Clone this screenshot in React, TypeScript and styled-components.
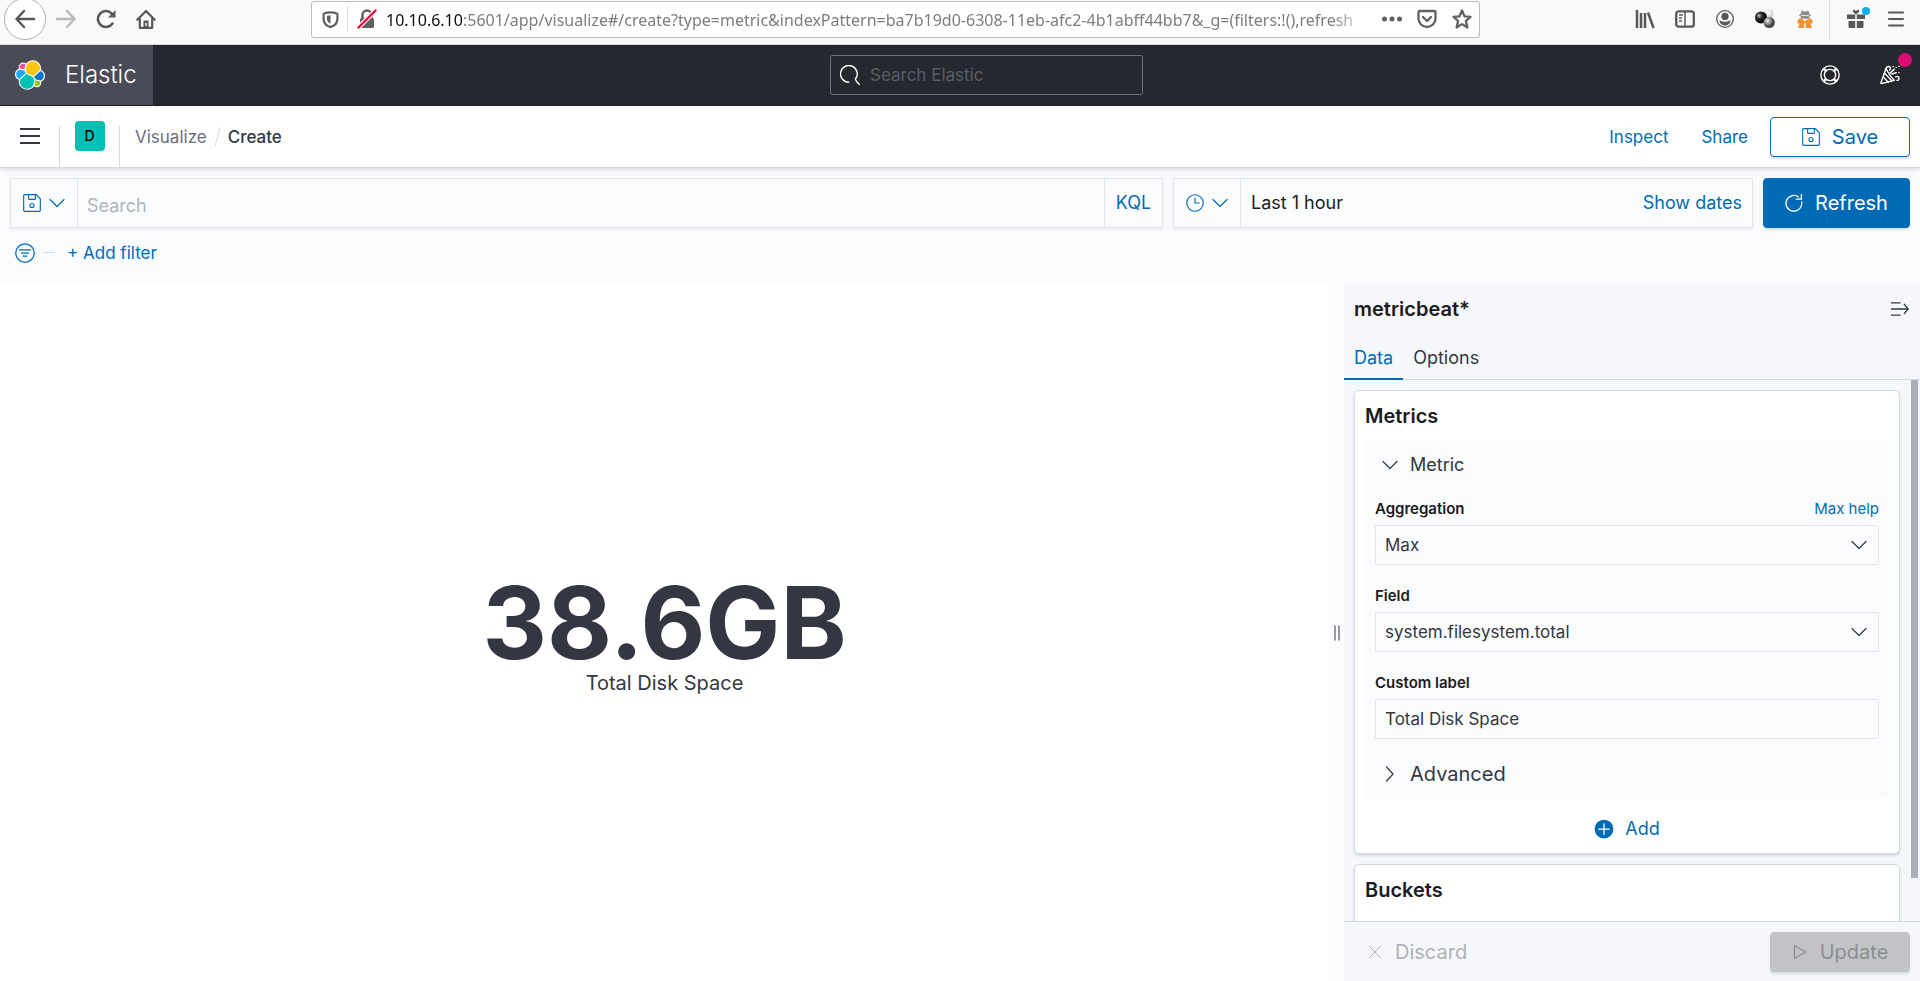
import React from 'react';
import styled, { createGlobalStyle } from 'styled-components';

const blue = '#006bb4';
const ink = '#343741';
const title = '#1a1c21';
const line = '#d3dae6';
const faint = '#e2e5f0';
const sans = 'Inter, "Liberation Sans", sans-serif';

const GlobalStyle = createGlobalStyle`
  *, *::before, *::after { box-sizing: border-box; }
  body { margin: 0; background: #fafbfd; color: ${ink}; font: 400 18px/24px ${sans}; }
  button, input, select { font: inherit; color: inherit; margin: 0; }
  button { background: none; border: 0; padding: 0; cursor: pointer; }
  a { color: ${blue}; text-decoration: none; }
  h1, h2, p { margin: 0; }
  svg { display: block; flex: none; }
`;

const Page = styled.div`
  display: flex;
  flex-direction: column;
  height: 100vh;
  overflow: hidden;
`;

/* Browser toolbar */

const BrowserBar = styled.header`
  display: flex;
  align-items: center;
  flex: none;
  height: 45px;
  padding: 0 4px 6px;
  background: #f9f9fa;
  border-bottom: 1px solid #dcdcdd;
  color: #58585a;
`;

const ToolButton = styled.button<{ $round?: boolean; $dim?: boolean }>`
  display: flex;
  align-items: center;
  justify-content: center;
  flex: none;
  width: ${(p) => (p.$round ? 42 : 40)}px;
  height: ${(p) => (p.$round ? 42 : 40)}px;
  border-radius: 50%;
  border: ${(p) => (p.$round ? '1px solid #b1b1b3' : '0')};
  background: ${(p) => (p.$round ? '#fff' : 'none')};
  color: ${(p) => (p.$dim ? '#b9b9ba' : 'inherit')};

  svg { overflow: visible; }
`;

const UrlBox = styled.div`
  display: flex;
  align-items: center;
  flex: 1;
  min-width: 0;
  height: 37px;
  margin: 0 145px;
  padding: 0 7px 0 10px;
  background: #fff;
  border: 1px solid #bdbdbf;
  border-radius: 3px;
  color: #606062;
`;

const UrlRule = styled.span`
  width: 1px;
  height: 26px;
  margin: 0 9px 0 8px;
  background: #dcdcdd;
`;

const Url = styled.div`
  flex: 1;
  min-width: 0;
  margin: 2px 14px 0 9px;
  overflow: hidden;
  white-space: nowrap;
  font: 400 16px/24px "Noto Sans", sans-serif;
  color: #7d7d7f;
  mask-image: linear-gradient(to left, transparent 0, #000 36px);

  b { font-weight: 400; color: #0c0c0d; }
`;

const UrlActions = styled.div`
  display: flex;
  gap: 15px;
`;

const ToolRule = styled.span`
  width: 1px;
  height: 40px;
  margin: 0 6px 0 4px;
  background: #dcdcdd;
`;

/* Elastic header */

const TopHeader = styled.div`
  display: grid;
  grid-template-columns: calc(50% - 130px) 313px 1fr;
  align-items: center;
  flex: none;
  height: 61px;
  background: #25282f;
  border-bottom: 1px solid #1d1e24;
  color: #fff;
`;

const Brand = styled.a`
  display: flex;
  align-items: center;
  justify-self: start;
  gap: 20px;
  height: 60px;
  padding: 0 16px 0 15px;
  background: #494c56;
  color: #fff;
  font-size: 24px;
  font-weight: 300;
`;

const GlobalSearch = styled.label`
  display: flex;
  align-items: center;
  gap: 10px;
  height: 40px;
  padding: 0 9px;
  border: 1px solid #6c6e73;
  border-radius: 2px;

  input {
    flex: 1;
    min-width: 0;
    padding: 0;
    border: 0;
    outline: 0;
    background: none;
    font-size: 17px;
  }
  input::placeholder { color: #5b5d63; opacity: 1; }
`;

const HeaderIcons = styled.div`
  display: flex;
  justify-self: end;
  height: 60px;
`;

const HeaderIcon = styled.button`
  position: relative;
  display: flex;
  align-items: center;
  justify-content: center;
  width: 60px;
`;

const NewsDot = styled.span`
  position: absolute;
  top: 8px;
  right: 8px;
  width: 14px;
  height: 14px;
  border-radius: 50%;
  background: #dd0a73;
`;

/* Breadcrumb bar */

const NavBar = styled.nav`
  display: flex;
  align-items: center;
  flex: none;
  height: 62px;
  padding-right: 10px;
  background: #fff;
  border-bottom: 1px solid ${line};
  box-shadow: 0 2px 3px rgba(152, 162, 179, 0.3);
  font-size: 17px;
  z-index: 1;
`;

const NavCell = styled.div`
  display: flex;
  align-items: center;
  justify-content: center;
  width: 60px;
  height: 41px;
  margin-top: 20px;
  padding-bottom: 21px;
  border-right: 1px solid ${line};
`;

const SpaceBadge = styled.button`
  flex: none;
  width: 30px;
  height: 30px;
  border-radius: 4px;
  background: #00bfb3;
  color: #000;
  font-size: 14px;
  font-weight: 500;
  line-height: 30px;
`;

const Crumbs = styled.div`
  display: flex;
  align-items: center;
  flex: 1;
  gap: 7px;
  padding-left: 15px;

  a { color: #69707d; }
  strong { font-weight: 500; }
`;

const Slash = styled.span`
  width: 1px;
  height: 20px;
  margin: 0 3px;
  background: ${line};
  transform: rotate(15deg);
`;

const NavLinks = styled.div`
  display: flex;
  align-items: center;
  gap: 33px;
  margin-right: 22px;
`;

const ActionButton = styled.button<{ $kind: 'outline' | 'fill' | 'disabled' }>`
  display: flex;
  align-items: center;
  justify-content: center;
  gap: 12px;
  flex: none;
  width: ${(p) => (p.$kind === 'fill' ? 147 : 140)}px;
  height: ${(p) => (p.$kind === 'fill' ? 50 : 40)}px;
  border: 1px solid ${(p) => (p.$kind === 'disabled' ? '#c2c3c6' : blue)};
  border-radius: 4px;
  background: ${(p) => ({ outline: '#fff', fill: blue, disabled: '#c2c3c6' })[p.$kind]};
  color: ${(p) => ({ outline: blue, fill: '#fff', disabled: '#8d8e92' })[p.$kind]};
  box-shadow: 0 2px 2px rgba(152, 162, 179, 0.3);
  font-size: 20px;
`;

/* Query bar */

const QueryRow = styled.div`
  display: flex;
  flex: none;
  gap: 10px;
  padding: 10px 10px 0;
`;

const ControlGroup = styled.div<{ $width?: number }>`
  display: flex;
  align-items: center;
  flex: ${(p) => (p.$width ? `0 0 ${p.$width}px` : '1')};
  height: 50px;
  background: #fbfcfd;
  border: 1px solid ${faint};
  box-shadow: 0 2px 2px rgba(152, 162, 179, 0.15);
`;

const MenuToggle = styled.button`
  display: flex;
  align-items: center;
  gap: 8px;
  height: 100%;
  padding: 0 12px;
  border-right: 1px solid ${faint};
  color: ${blue};
`;

const QueryInput = styled.input`
  flex: 1;
  min-width: 0;
  height: 100%;
  padding: 4px 9px 0;
  border: 0;
  outline: 0;
  background: none;

  &::placeholder { color: #b0b3ba; opacity: 1; }
`;

const QueryLanguage = styled.button`
  width: 58px;
  height: 100%;
  border-left: 1px solid ${faint};
  color: ${blue};
`;

const TimeRange = styled.button`
  flex: 1;
  height: 100%;
  padding-left: 10px;
  text-align: left;
  color: ${title};
`;

const ShowDates = styled.a`
  padding-right: 10px;
`;

const FilterRow = styled.div`
  display: flex;
  align-items: center;
  flex: none;
  height: 56px;
  padding: 0 15px 7px;
  color: ${blue};
`;

const FilterDash = styled.span`
  width: 12px;
  height: 1px;
  margin: 0 12px 0 8px;
  background: ${line};
`;

const LinkButton = styled.button<{ $small?: boolean }>`
  display: flex;
  align-items: center;
  gap: 11px;
  color: ${blue};
  font-size: ${(p) => (p.$small ? 17 : 18)}px;
`;

/* Workspace */

const Workspace = styled.main`
  display: flex;
  flex: 1;
  min-height: 0;
`;

const Canvas = styled.section`
  display: flex;
  flex-direction: column;
  align-items: center;
  justify-content: center;
  flex: 1;
  padding-top: 4px;
  background: #fff;
`;

const MetricValue = styled.p`
  font-size: 100px;
  font-weight: 700;
  line-height: 96px;
`;

const MetricLabel = styled.p`
  font-size: 20px;
  line-height: 24px;
`;

const Resizer = styled.button`
  display: flex;
  align-items: center;
  justify-content: center;
  flex: none;
  width: 15px;
`;

const Sidebar = styled.aside`
  display: flex;
  flex-direction: column;
  flex: 0 0 576px;
  min-height: 0;
  background: #f5f7fa;
`;

const SidebarHead = styled.div`
  display: flex;
  align-items: center;
  justify-content: space-between;
  flex: none;
  height: 50px;
  padding: 0 11px 0 10px;
`;

const Heading = styled.h2`
  color: ${title};
  font-size: 20px;
  font-weight: 600;
  line-height: 30px;
`;

const Tabs = styled.div`
  display: flex;
  flex: none;
  height: 46px;
  border-bottom: 1px solid ${line};
`;

const Tab = styled.button<{ $active?: boolean }>`
  height: 46px;
  padding: 4px 10px 0;
  border-bottom: 2px solid ${(p) => (p.$active ? blue : 'transparent')};
  color: ${(p) => (p.$active ? blue : ink)};
`;

const ScrollArea = styled.div`
  display: flex;
  flex: 1;
  min-height: 0;
  padding: 0 2px 0 10px;
  overflow: hidden;
`;

const Panels = styled.div`
  display: flex;
  flex-direction: column;
  flex: 1;
  gap: 10px;
  padding: 10px 11px 0 0;
`;

const ScrollThumb = styled.div`
  width: 7px;
  height: 92%;
  background: #abb0b8;
`;

const Panel = styled.section`
  display: flex;
  flex-direction: column;
  flex: none;
  min-height: 80px;
  padding: 10px;
  background: #fff;
  border: 1px solid ${line};
  border-radius: 5px;
  box-shadow: 0 2px 3px rgba(152, 162, 179, 0.35);
`;

const MetricBox = styled.div`
  display: flex;
  flex-direction: column;
  margin-top: 10px;
  padding: 10px;
  background: #fafbfd;
  border-radius: 5px;
`;

const Accordion = styled.button<{ $large?: boolean }>`
  display: flex;
  align-items: center;
  gap: 12px;
  height: ${(p) => (p.$large ? 30 : 27)}px;
  padding-left: 7px;
  font-size: ${(p) => (p.$large ? 20 : 18)}px;
`;

const Field = styled.div`
  display: flex;
  flex-direction: column;
  gap: 5px;
  margin-top: 20px;
`;

const FieldHead = styled.div`
  display: flex;
  justify-content: space-between;
  font-size: 15px;
  line-height: 22px;

  label { color: ${title}; font-weight: 600; }
`;

const SelectWrap = styled.div`
  position: relative;

  svg { position: absolute; right: 12px; top: 12px; pointer-events: none; }
`;

const Select = styled.select`
  display: block;
  width: 100%;
  height: 40px;
  padding: 0 9px;
  appearance: none;
  border: 1px solid ${faint};
  border-radius: 2px;
  background: #fbfcfd;
  font-size: 17px;
`;

const TextInput = styled.input`
  height: 40px;
  padding: 0 9px;
  border: 1px solid ${faint};
  border-radius: 2px;
  background: #fbfcfd;
  font-size: 17px;
`;

const AdvancedRow = styled.div`
  display: flex;
  margin-top: 20px;
`;

const AddRow = styled.div`
  display: flex;
  justify-content: center;
  padding: 18px 0 2px;
`;

const SidebarFoot = styled.div`
  display: flex;
  align-items: center;
  justify-content: space-between;
  flex: none;
  height: 60px;
  padding: 0 10px 0 23px;
  border-top: 1px solid ${line};
`;

const Discard = styled.button`
  display: flex;
  align-items: center;
  gap: 12px;
  color: #b0b2b8;
  font-size: 20px;
`;

/* Icons */

const Svg = ({ size = 20, box = 16, width = 1, children }: { size?: number; box?: number; width?: number; children: React.ReactNode }) => (
  <svg width={size} height={size} viewBox={`0 0 ${box} ${box}`} fill="none" stroke="currentColor" strokeWidth={width} aria-hidden="true">
    {children}
  </svg>
);

const Chevron = ({ right }: { right?: boolean }) => (
  <Svg size={16} width={1.2}>
    <path d={right ? 'M4.5 1l6.5 7-6.5 7' : 'M1 4.5l7 7 7-7'} strokeLinecap="round" strokeLinejoin="round" />
  </Svg>
);

const SaveIcon = () => (
  <Svg size={18}>
    <path d="M1.5.6h10.2l3.7 3.7v10.2a.9.9 0 01-.9.9h-13a.9.9 0 01-.9-.9v-13a.9.9 0 01.9-.9z" />
    <path d="M5 .8v3.4a.6.6 0 00.6.6h4.8a.6.6 0 00.6-.6V.8" />
    <circle cx="8" cy="10.2" r="1.8" />
  </Svg>
);

const logoShapes = [
  ['#fec514', 'M12.58 13.787l7.002 3.211 7.066-6.213a7.849 7.849 0 00.152-1.557c0-4.287-3.464-7.773-7.72-7.773a7.731 7.731 0 00-6.411 3.41l-1.177 6.107 1.088 2.815z'],
  ['#00bfb3', 'M5.333 21.228a8.006 8.006 0 00-.15 1.58c0 4.3 3.48 7.795 7.758 7.795a7.745 7.745 0 006.44-3.43l1.166-6.104-1.556-2.985-7.03-3.213-6.628 6.357z'],
  ['#f04e98', 'M5.288 9.067l4.8 1.137 1.05-5.475A3.804 3.804 0 008.832 3.95a3.826 3.826 0 00-3.811 3.838c0 .435.091.873.267 1.279z'],
  ['#1ba9f5', 'M4.872 10.215c-2.143.714-3.638 2.78-3.638 5.057 0 2.217 1.366 4.197 3.416 4.982l6.733-6.12-1.236-2.658-5.275-1.261z'],
  ['#93c90e', 'M20.873 27.173a3.803 3.803 0 002.295.778 3.826 3.826 0 003.811-3.838c0-.434-.09-.872-.266-1.278l-4.796-1.128-1.044 5.466z'],
  ['#0077cc', 'M21.848 20.563l5.28 1.241c2.143-.714 3.639-2.78 3.639-5.057 0-2.217-1.37-4.195-3.42-4.978l-6.903 6.085 1.404 2.709z'],
];

const ElasticLogo = () => (
  <svg width="30" height="30" viewBox="0 0 32 32" aria-hidden="true">
    <g fill="#fff" stroke="#fff" strokeWidth="2.4" strokeLinejoin="round">
      {logoShapes.map(([color, d]) => <path key={color} d={d} />)}
    </g>
    {logoShapes.map(([color, d]) => <path key={color} d={d} fill={color} />)}
  </svg>
);

const BrowserToolbar = () => (
  <BrowserBar>
    <ToolButton $round aria-label="Back">
      <Svg size={22} box={22} width={2.4}><path d="M20 11H2.5M10 3L2.5 11l7.5 8" strokeLinecap="round" strokeLinejoin="round" /></Svg>
    </ToolButton>
    <ToolButton $dim aria-label="Forward">
      <Svg size={22} box={22} width={2.4}><path d="M2 11h17M12 3l7.5 8-7.5 8" strokeLinecap="round" strokeLinejoin="round" /></Svg>
    </ToolButton>
    <ToolButton aria-label="Reload">
      <Svg box={20} width={2.6}>
        <path d="M16.5 14.5A8 8 0 1 1 15.8 4.600" strokeLinecap="round" />
        <path d="M19.5 1v7.5H12z" fill="currentColor" stroke="none" />
      </Svg>
    </ToolButton>
    <ToolButton aria-label="Home">
      <Svg box={20} width={2.2}>
        <path d="M1.3 10.8L10 2l8.7 8.8M3.8 10v8.8h12.4V10" strokeLinecap="round" strokeLinejoin="round" />
        <path d="M7.5 18.5v-7h5v7z" fill="currentColor" stroke="none" />
        <path d="M10 17v-3" stroke="#fff" strokeWidth="1.4" />
      </Svg>
    </ToolButton>
    <UrlBox>
      <Svg size={17} box={18} width={2.3}>
        <path d="M9 1.4c2.5 0 5 .6 7.3 1.5v5.6c0 4-2.8 7.2-7.3 8.600-4.500-1.400-7.300-4.600-7.300-8.600V2.900C4 2 6.500 1.400 9 1.400z" strokeLinejoin="round" />
        <path d="M9 4.5v9C6.5 12.5 5.2 10.6 5.2 8V5z" fill="currentColor" stroke="none" />
      </Svg>
      <UrlRule />
      <Svg size={20} box={20} width={2.4}>
        <path d="M5.5 9V6a4.5 4.5 0 019 0v3" />
        <rect x="3" y="9" width="14" height="10" rx="1.5" fill="currentColor" stroke="none" />
        <path d="M1.5 18.5L18.5 1.5" stroke="#fff" strokeWidth="4.5" />
        <path d="M1.5 18.5L18.5 1.5" stroke="#ff0039" strokeWidth="2.4" strokeLinecap="round" />
      </Svg>
      <Url>
        <b>10.10.6.10</b>:5601/app/visualize#/create?type=metric&amp;indexPattern=ba7b19d0-6308-11eb-afc2-4b1abff44bb7&amp;_g=(filters:!(),refresh
      </Url>
      <UrlActions>
        <Svg box={20}><g fill="currentColor" stroke="none"><circle cx="2.5" cy="10" r="2.5" /><circle cx="10" cy="10" r="2.5" /><circle cx="17.5" cy="10" r="2.5" /></g></Svg>
        <Svg box={20} width={2.3}>
          <path d="M2.5 2h15a1 1 0 011 1v6.5a8.5 8.5 0 01-17 0V3a1 1 0 011-1z" strokeLinejoin="round" />
          <path d="M6 8l4 4 4-4" strokeLinecap="round" strokeLinejoin="round" />
        </Svg>
        <Svg box={20} width={2.3}><path d="M10 1.5l2.5 5.8 6 .5-4.6 4.2 1.5 6.5-5.4-3.4-5.4 3.4L6.1 12 1.5 7.8l6-.5z" strokeLinejoin="round" /></Svg>
      </UrlActions>
    </UrlBox>
    <ToolButton aria-label="Library">
      <Svg box={20} width={2.5}><path d="M2 1v18M6 4v15M10 4v15" /><path d="M13 3.5L18.5 19" /></Svg>
    </ToolButton>
    <ToolButton aria-label="Sidebars">
      <Svg box={20} width={2.3}>
        <rect x="1.2" y="2.3" width="17.6" height="15.4" rx="2.5" />
        <path d="M10 2v16" strokeWidth="1.5" /><path d="M4 6h4M4 9h3M4 12h3" strokeWidth="1.4" />
      </Svg>
    </ToolButton>
    <ToolButton aria-label="Account">
      <Svg size={18} box={18} width={1.3}>
        <circle cx="9" cy="9" r="8.3" />
        <circle cx="9" cy="6.4" r="3.6" fill="currentColor" stroke="none" />
        <path d="M3.6 10.4c1.5.3 3 1.3 5.4 1.3s3.9-1 5.4-1.3c0 2.6-2 5-5.4 5s-5.4-2.4-5.4-5z" fill="currentColor" stroke="none" />
      </Svg>
    </ToolButton>
    <ToolButton aria-label="Proxy extension">
      <svg width="20" height="20" viewBox="0 0 20 20" aria-hidden="true">
        <defs>
          <radialGradient id="dark" cx="35%" cy="35%"><stop offset="0" stopColor="#ccc" /><stop offset=".45" stopColor="#333" /><stop offset="1" stopColor="#0a0a0a" /></radialGradient>
          <radialGradient id="mid" cx="35%" cy="35%"><stop offset="0" stopColor="#eee" /><stop offset=".6" stopColor="#888" /><stop offset="1" stopColor="#444" /></radialGradient>
          <radialGradient id="light" cx="40%" cy="35%"><stop offset="0" stopColor="#fff" /><stop offset="1" stopColor="#d2d2d2" /></radialGradient>
        </defs>
        <circle cx="14" cy="5" r="4.6" fill="url(#light)" />
        <circle cx="6" cy="8.5" r="6" fill="url(#dark)" />
        <circle cx="14.2" cy="13.5" r="5.6" fill="url(#mid)" />
      </svg>
    </ToolButton>
    <ToolButton aria-label="Private extension">
      <svg width="18" height="20" viewBox="0 0 18 20" aria-hidden="true">
        <path fill="#8e8e8e" d="M5.5 1.5L9 2.8l3.5-1.3.8 3.5 2 1.2-1.8 1-.8 2.5H5.3L4.5 7.2l-1.8-1L4.7 5z" />
        <path fill="#f69331" d="M4.5 8.8L9 12.3l4.5-3.5 3 2.5v3.2h-2l1.5 4.5h-6.2V14H8.2v5H2l1.5-4.5h-2v-3.2z" />
        <path stroke="#f9f9fa" strokeWidth=".8" d="M5 6.5h8" />
      </svg>
    </ToolButton>
    <ToolRule />
    <ToolButton aria-label="What's new">
      <svg width="24" height="24" viewBox="0 0 24 24" fill="currentColor" aria-hidden="true">
        <path d="M3 7.5h8.2V12H3zM12.8 7.5H21V12h-8.2zM4.5 14h6.7v7H5.5a1 1 0 01-1-1zM12.8 14h6.7v6a1 1 0 01-1 1h-5.7zM9 2.5l3 1.3 3-1.3V5l-3 2.500L9 5z" />
        <circle cx="22" cy="4" r="4" fill="#00b0f8" />
      </svg>
    </ToolButton>
    <ToolButton aria-label="Menu">
      <Svg size={16} width={2.2}><path d="M1 1.5h14M1 8h14M1 14.5h14" strokeLinecap="round" /></Svg>
    </ToolButton>
  </BrowserBar>
);

export default function App() {
  return (
    <Page>
      <GlobalStyle />
      <BrowserToolbar />

      <TopHeader>
        <Brand href="#home"><ElasticLogo />Elastic</Brand>
        <GlobalSearch>
          <Svg width={1.1}><path d="M7 13.8A6.7 6.7 0 1 1 12.3 11.3Q12.8 13.5 15.6 15.6" strokeLinecap="round" /></Svg>
          <input type="search" placeholder="Search Elastic" aria-label="Search Elastic" />
        </GlobalSearch>
        <HeaderIcons>
          <HeaderIcon aria-label="Help">
            <Svg width={1.1}>
              <circle cx="8" cy="8" r="7.3" /><circle cx="8" cy="8" r="4.5" />
              <path d="M3.2 2.7l2.3 2M4.7 5.5l-2-2.3M12.8 2.7l-2.3 2M11.3 5.5l2-2.3M3.2 13.3l2.3-2M4.7 10.5l-2 2.3M12.8 13.3l-2.3-2M11.3 10.5l2 2.3" />
            </Svg>
          </HeaderIcon>
          <HeaderIcon aria-label="News">
            <Svg width={1.1}>
              <path d="M4.8 2.8L.7 14.2c-.1.4.2.7.6.6l9.5-2.3M4.8 2.8c1.6 3.2 3.4 6.5 6.6 9.4M3.6 6.5l6 6.3M2.5 9.5l4.2 4.3" strokeLinejoin="round" strokeLinecap="round" />
              <path d="M4.8 2.7c.7-1.7 3-2 3.5-.6.3.9-.2 1.5-.6 2M8 6.5l3.5-3.2M9.5 7.2l3.5-1M12.5 9.5c1.4-.7 2.7 0 2.7 1.2 0 1-.8 1.7-1.7 1.6" strokeLinecap="round" />
              <path d="M10.5.8v.9M13 1.5v.8M15.2.6v.9M15.2 5.5v.8" />
            </Svg>
            <NewsDot />
          </HeaderIcon>
        </HeaderIcons>
      </TopHeader>

      <NavBar>
        <NavCell><button aria-label="Toggle navigation"><Svg box={20} width={2}><path d="M0 3h20M0 10h20M0 17h20" /></Svg></button></NavCell>
        <NavCell><SpaceBadge>D</SpaceBadge></NavCell>
        <Crumbs><a href="#visualize">Visualize</a><Slash /><strong>Create</strong></Crumbs>
        <NavLinks><a href="#inspect">Inspect</a><a href="#share">Share</a></NavLinks>
        <ActionButton $kind="outline"><SaveIcon />Save</ActionButton>
      </NavBar>

      <QueryRow>
        <ControlGroup>
          <MenuToggle aria-label="Saved queries"><SaveIcon /><Chevron /></MenuToggle>
          <QueryInput placeholder="Search" aria-label="Search" />
          <QueryLanguage>KQL</QueryLanguage>
        </ControlGroup>
        <ControlGroup $width={580}>
          <MenuToggle aria-label="Quick time ranges">
            <Svg size={18}><circle cx="8" cy="8" r="7.3" /><path d="M8 3.5V8h3.8" strokeLinecap="round" /></Svg>
            <Chevron />
          </MenuToggle>
          <TimeRange>Last 1 hour</TimeRange>
          <ShowDates href="#dates">Show dates</ShowDates>
        </ControlGroup>
        <ActionButton $kind="fill">
          <Svg size={18} width={1.2}><path d="M12 2.6A7 7 0 1014.8 7M14.6 0v4.5H10" strokeLinecap="round" /></Svg>
          Refresh
        </ActionButton>
      </QueryRow>
      <FilterRow>
        <button aria-label="Filter options">
          <Svg><circle cx="8" cy="8" r="7.4" /><path d="M3.2 5.5h9.6M4.9 8h6.2M6.2 10.5h3.6" /></Svg>
        </button>
        <FilterDash />
        <LinkButton $small>+ Add filter</LinkButton>
      </FilterRow>

      <Workspace>
        <Canvas>
          <MetricValue>38.6GB</MetricValue>
          <MetricLabel>Total Disk Space</MetricLabel>
        </Canvas>
        <Resizer aria-label="Resize panels">
          <Svg size={16}><path d="M6 .5v15M10 .5v15" /></Svg>
        </Resizer>
        <Sidebar>
          <SidebarHead>
            <Heading as="h1">metricbeat*</Heading>
            <button aria-label="Collapse sidebar">
              <Svg size={18} width={1.2}><path d="M0 2.5h8.5M0 8h15M0 13.5h8.5M11.5 3.5L15.3 8l-3.8 4.5" /></Svg>
            </button>
          </SidebarHead>
          <Tabs role="tablist">
            <Tab role="tab" aria-selected="true" $active>Data</Tab>
            <Tab role="tab" aria-selected="false">Options</Tab>
          </Tabs>
          <ScrollArea>
            <Panels>
              <Panel>
                <Heading>Metrics</Heading>
                <MetricBox>
                  <Accordion aria-expanded="true"><Chevron />Metric</Accordion>
                  <Field>
                    <FieldHead><label htmlFor="aggregation">Aggregation</label><a href="#help">Max help</a></FieldHead>
                    <SelectWrap><Select id="aggregation"><option>Max</option></Select><Chevron /></SelectWrap>
                  </Field>
                  <Field>
                    <FieldHead><label htmlFor="field">Field</label></FieldHead>
                    <SelectWrap><Select id="field"><option>system.filesystem.total</option></Select><Chevron /></SelectWrap>
                  </Field>
                  <Field>
                    <FieldHead><label htmlFor="custom">Custom label</label></FieldHead>
                    <TextInput id="custom" defaultValue="Total Disk Space" />
                  </Field>
                  <AdvancedRow><Accordion $large aria-expanded="false"><Chevron right />Advanced</Accordion></AdvancedRow>
                </MetricBox>
                <AddRow>
                  <LinkButton>
                    <Svg><circle cx="8" cy="8" r="7.5" fill={blue} stroke="none" /><path d="M8 3.8v8.4M3.8 8h8.4" stroke="#fff" strokeLinecap="round" /></Svg>
                    Add
                  </LinkButton>
                </AddRow>
              </Panel>
              <Panel><Heading>Buckets</Heading></Panel>
            </Panels>
            <ScrollThumb />
          </ScrollArea>
          <SidebarFoot>
            <Discard disabled><Svg size={16}><path d="M2 2l12 12M14 2L2 14" /></Svg>Discard</Discard>
            <ActionButton $kind="disabled" disabled>
              <Svg size={16} width={1.2}><path d="M2.5 1.5v13L13.5 8z" strokeLinejoin="round" /></Svg>
              Update
            </ActionButton>
          </SidebarFoot>
        </Sidebar>
      </Workspace>
    </Page>
  );
}
